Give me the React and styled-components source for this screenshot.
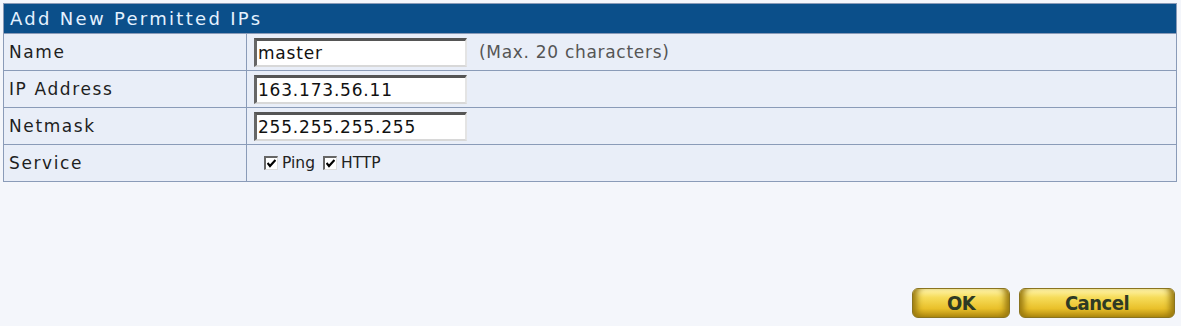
import React from "react";
import styled, { createGlobalStyle } from "styled-components";

const GlobalStyle = createGlobalStyle`
  html, body {
    margin: 0;
    padding: 0;
    background: #f4f6fb;
  }
  body {
    font-family: Tahoma, "DejaVu Sans", Verdana, sans-serif;
  }
`;

const Page = styled.div`
  width: 1181px;
  height: 326px;
  padding: 3px 4px 0 3px;
  box-sizing: border-box;
  background: #f4f6fb;
`;

const Table = styled.div`
  border: 1px solid #8a9bb8;
  background: #e9eef8;
`;

const Header = styled.div`
  height: 29px;
  background: #0b4f8a;
  color: #e4f2ff;
  font-size: 18px;
  letter-spacing: 2.3px;
  display: flex;
  align-items: center;
  padding-left: 6px;
`;

const Row = styled.div`
  display: grid;
  grid-template-columns: 243px 1fr;
  height: 36px;
  border-top: 1px solid #8a9bb8;
`;

const Label = styled.div`
  display: flex;
  align-items: center;
  padding-left: 5px;
  font-size: 17px;
  letter-spacing: 1.6px;
  color: #1e1e1e;
  border-right: 1px solid #8a9bb8;
`;

const Value = styled.div`
  display: flex;
  align-items: center;
  gap: 12px;
  padding-left: 7px;
  font-size: 15px;
  color: #444;
`;

const Input = styled.div`
  width: 207px;
  height: 24px;
  background: #fff;
  border-top: 3px solid #555;
  border-left: 3px solid #666;
  border-bottom: 2px solid #d8d8d8;
  border-right: 2px solid #e4e4e4;
  display: flex;
  align-items: center;
  padding-left: 1px;
  font-size: 17px;
  letter-spacing: 0.8px;
  color: #111;
`;

const Hint = styled.span`
  color: #555;
  font-size: 17px;
  letter-spacing: 0.7px;
`;

const Check = styled.label`
  display: flex;
  align-items: center;
  gap: 4px;
  margin-left: ${(p) => p.$ml || 0}px;
  font-size: 15.5px;
  color: #222;
`;

const Box = styled.span`
  width: 11px;
  height: 11px;
  background: #fff;
  border-top: 2px solid #666;
  border-left: 2px solid #666;
  border-bottom: 1px solid #ddd;
  border-right: 1px solid #ddd;
  display: flex;
  align-items: center;
  justify-content: center;
`;

const Services = styled.div`
  display: flex;
  align-items: center;
  gap: 8px;
`;

const Actions = styled.div`
  display: flex;
  justify-content: flex-end;
  gap: 9px;
  margin-top: 106px;
  padding-right: 2px;
`;

const GoldButton = styled.button`
  width: ${(p) => p.$w}px;
  height: 30px;
  border: 1px solid #8a7420;
  border-radius: 6px;
  background: linear-gradient(
    to bottom,
    #fff6b0 0%,
    #f6dc5a 30%,
    #e9c02a 70%,
    #b08a10 100%
  );
  box-shadow: inset 8px 0 6px -4px #9a7a10, inset -8px 0 6px -4px #9a7a10;
  font-family: "DejaVu Sans Condensed", "Liberation Sans Narrow", sans-serif;
  font-weight: bold;
  font-size: 20px;
  color: #2e3a24;
  padding: 0;
  letter-spacing: -0.5px;
`;

const CheckMark = () => (
  <svg width="9" height="9" viewBox="0 0 9 9">
    <path d="M0.5 4 L3 7 L8.5 1" stroke="#000" strokeWidth="2.2" fill="none" />
  </svg>
);

const rows = [
  { label: "Name", value: "master", hint: "(Max. 20 characters)" },
  { label: "IP Address", value: "163.173.56.11" },
  { label: "Netmask", value: "255.255.255.255" },
];

export default function App() {
  return (
    <Page>
      <GlobalStyle />
      <Table>
        <Header>Add New Permitted IPs</Header>
        {rows.map((r) => (
          <Row key={r.label}>
            <Label>{r.label}</Label>
            <Value>
              <Input>{r.value}</Input>
              {r.hint && <Hint>{r.hint}</Hint>}
            </Value>
          </Row>
        ))}
        <Row>
          <Label>Service</Label>
          <Value>
            <Services>
              <Check $ml={10}>
                <Box>
                  <CheckMark />
                </Box>
                Ping
              </Check>
              <Check>
                <Box>
                  <CheckMark />
                </Box>
                HTTP
              </Check>
            </Services>
          </Value>
        </Row>
      </Table>
      <Actions>
        <GoldButton $w={98}>OK</GoldButton>
        <GoldButton $w={156}>Cancel</GoldButton>
      </Actions>
    </Page>
  );
}
